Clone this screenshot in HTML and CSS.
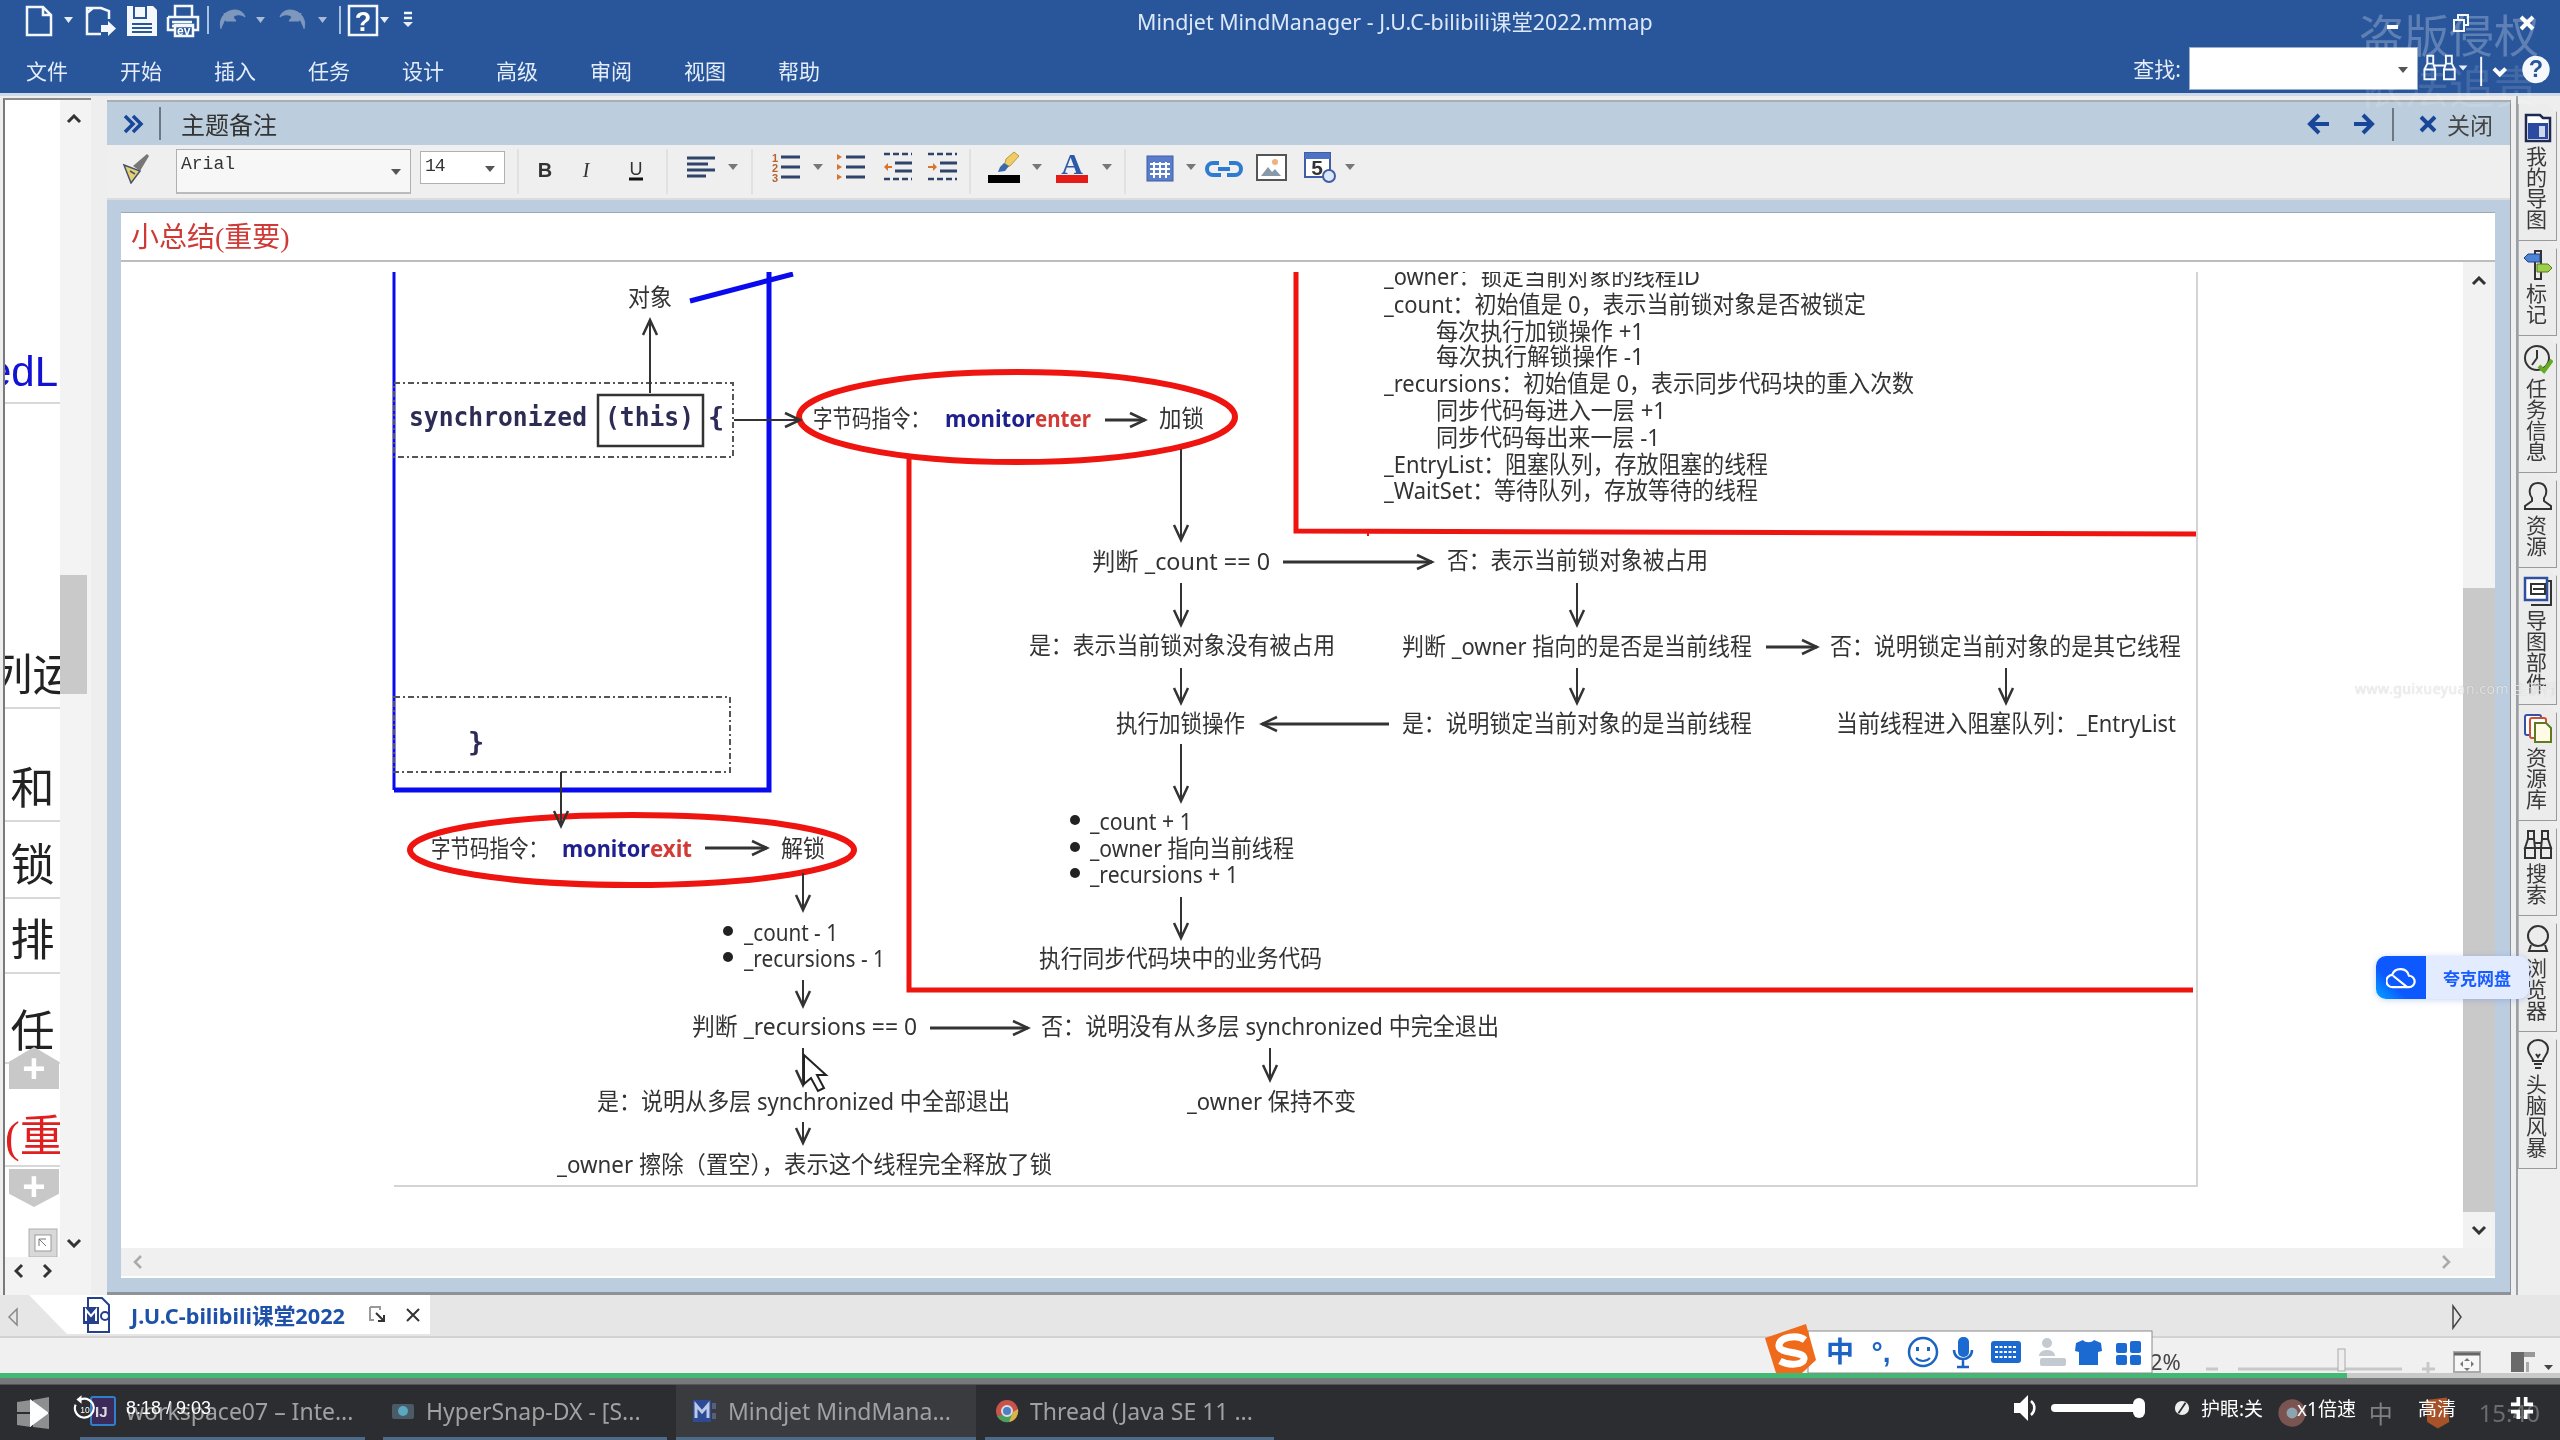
FILE: index.html
```html
<!DOCTYPE html>
<html lang="zh-CN">
<head>
    <meta charset="UTF-8">
    <title>Mindjet MindManager - J.U.C-bilibili课堂2022.mmap</title>
    <link rel="stylesheet" href="styles.css">
</head>
<body>
<div class="screen">

    <!-- window header -->
    <header class="header">
        <div class="titlebar">
            <svg class="qat" viewBox="0 0 430 47">
                <!-- new -->
                <path class="ic-w" d="M27 7h16l8 8v20H27z M43 7v8h8"/>
                <path class="ic-fill" d="M64 17h9l-4.500 6z"/>
                <!-- open -->
                <path class="ic-w" d="M87 13v-5h14l8 3v8 M87 13v21h14 M93 8l-6 5"/>
                <path class="ic-wf" d="M101 25h7v-4l8 7.500-8 7.500v-4h-7z"/>
                <!-- save -->
                <path class="ic-wf" d="M127 6h26l4 4v26h-30z"/>
                <path class="ic-b" d="M134 6h12v12h-12z M132 24h20 M132 28h20 M132 32h20"/>
                <path class="ic-wf" d="M141 8h3v8h-3z"/>
                <!-- print -->
                <path class="ic-w" d="M175 16v-10h17v10 M168 17h30v13h-6 M168 17v13h6 M172 22h20 M172 26h20"/>
                <path class="ic-w" d="M175 25h18v11h-18z"/>
                <text class="qat-small" x="177" y="35">ev</text>
                <path class="ic-sep" d="M208 6v28"/>
                <!-- undo / redo -->
                <path class="ic-dim" d="M221 29c-3-10 4-19 14-19 5 0 9 3 10 7-4-3-9-3-12 0l3 4h-10l-2-8 3 3"/>
                <path class="ic-dimtri" d="M256 17h9l-4.500 6z"/>
                <path class="ic-dim" d="M304 29c3-10-4-19-14-19-5 0-9 3-10 7 4-3 9-3 12 0l-3 4h10l2-8-3 3"/>
                <path class="ic-dimtri" d="M318 17h9l-4.500 6z"/>
                <path class="ic-sep" d="M340 6v28"/>
                <!-- help -->
                <path class="ic-w" d="M349 6h28v29h-28z"/>
                <text class="qat-help" x="363" y="31">?</text>
                <path class="ic-fill" d="M380 17h9l-4.500 6z"/>
                <path class="ic-w" d="M404 13h8 M404 18h8"/>
                <path class="ic-fill" d="M403 22h10l-5 5z"/>
            </svg>
            <div class="app-title">Mindjet MindManager - J.U.C-bilibili课堂2022.mmap</div>
            <svg class="winctl" viewBox="2380 0 180 47">
                <path class="ic-wl" d="M2387 27h11"/>
                <path class="ic-w2" d="M2454 20h10v11h-10z M2458 20v-5h10v10h-4"/>
                <path class="ic-wl" d="M2521 17l12 12 M2533 17l-12 12"/>
            </svg>
        </div>
        <nav class="menubar">
            <span class="menu-item">文件</span>
            <span class="menu-item">开始</span>
            <span class="menu-item">插入</span>
            <span class="menu-item">任务</span>
            <span class="menu-item">设计</span>
            <span class="menu-item">高级</span>
            <span class="menu-item">审阅</span>
            <span class="menu-item">视图</span>
            <span class="menu-item">帮助</span>
            <div class="finder">
                <label class="finder-label">查找:</label>
                <div class="finder-box"><span class="drop-tri"></span></div>
                <svg class="finder-tools" viewBox="2418 46 142 47">
                    <path class="ic-w2" d="M2426 56h6v8h-6z M2445 56h6v8h-6z M2423 70h11v10h-11z M2443 70h11v10h-11z M2426 64l-3 6 M2432 64l2 6 M2445 64l-2 6 M2451 64l3 6 M2432 66h13"/>
                    <path class="ic-fill" d="M2458 66h9l-4.500 5z"/>
                    <path class="ic-w2" d="M2481 57v30"/>
                    <path class="ic-wl" d="M2494 69l6 6 6-6"/>
                    <circle class="ic-wf" cx="2537" cy="70" r="14"/>
                    <text class="help-q" x="2537" y="78">?</text>
                </svg>
            </div>
        </nav>
    </header>

    <main class="workspace">
        <!-- outline pane on the left, mostly cut off -->
        <aside class="outline">
            <div class="outline-text">
                <div class="o-row o-r1 o-blue">edL</div>
                <div class="o-row o-r2 o-center">列运</div>
                <div class="o-row o-r3">和</div>
                <div class="o-row o-r4">锁</div>
                <div class="o-row o-r5">排</div>
                <div class="o-row o-r6">任</div>
                <div class="o-row o-r7 o-red">(重</div>
            </div>
            <div class="outline-scroll">
                <svg class="chev" viewBox="0 0 16 10"><path d="M2 8l6-6 6 6"/></svg>
                <div class="outline-thumb"></div>
                <svg class="thumb-btn" viewBox="0 0 30 30">
                    <rect class="tb-out" x="1" y="1" width="28" height="28"/>
                    <rect class="tb-in" x="7" y="7" width="16" height="16"/>
                    <path class="tb-ar" d="M11 18v-7h7 M11 11l7 7"/>
                </svg>
                <svg class="chev chev-down" viewBox="0 0 16 10"><path d="M2 2l6 6 6-6"/></svg>
            </div>
            <div class="outline-nav">
                <svg class="chev" viewBox="0 0 10 16"><path d="M8 2l-6 6 6 6"/></svg>
                <svg class="chev" viewBox="0 0 10 16"><path d="M2 2l6 6-6 6"/></svg>
            </div>
            <div class="zoom-plus zoom-plus-top"><span>+</span></div>
            <div class="zoom-plus zoom-plus-bottom"><span>+</span></div>
        </aside>

        <section class="notes">
            <div class="notes-head">
                <svg class="collapse" viewBox="0 0 24 24"><path d="M4 4l8 8-8 8 M12 4l8 8-8 8"/></svg>
                <span class="head-sep"></span>
                <span class="notes-title">主题备注</span>
                <svg class="head-nav" viewBox="2300 100 110 45">
                    <path class="nav-ar" d="M2312 123h18 M2320 114l-9 9 9 9"/>
                    <path class="nav-ar" d="M2355 123h18 M2364 114l9 9-9 9"/>
                    <path class="nav-sep" d="M2394 107v33"/>
                </svg>
                <svg class="head-x" viewBox="0 0 20 20"><path d="M3 3l14 14 M17 3L3 17"/></svg>
                <span class="head-close">关闭</span>
            </div>

            <div class="toolbar">
                <svg class="brush" viewBox="0 0 30 32">
                    <path class="brush-b" d="M12 14l14-12 2 2-9 15z"/>
                    <path class="brush-y" d="M3 13l16 6-9 12z"/>
                    <path class="brush-l" d="M3 13l16 6-9 12z M9 19l5 3"/>
                </svg>
                <div class="font-select">Arial<span class="drop-tri"></span></div>
                <div class="size-select">14<span class="drop-tri"></span></div>
                <svg class="tb-strip" viewBox="515 145 850 55">
                    <path class="tb-sep" d="M518 150v45 M667 150v45 M752 150v45 M970 150v45 M1125 150v45"/>
                    <text class="tb-b" x="545" y="178">B</text>
                    <text class="tb-i" x="586" y="178">I</text>
                    <text class="tb-u" x="636" y="176">U</text>
                    <path class="tb-ubar" d="M629 180h14"/>
                    <!-- align -->
                    <path class="tb-line" d="M687 159h28 M687 165h21 M687 171h28 M687 177h19"/>
                    <path class="tb-tri" d="M728 165h10l-5 6z"/>
                    <!-- numbered, bullets -->
                    <text class="tb-num" x="772" y="163">1</text>
                    <text class="tb-num" x="772" y="173">2</text>
                    <text class="tb-num" x="772" y="183">3</text>
                    <path class="tb-line" d="M781 158h19 M781 168h19 M781 178h19"/>
                    <path class="tb-tri" d="M813 165h10l-5 6z"/>
                    <path class="tb-dot" d="M837 155l5 3-5 3z M837 165l5 3-5 3z M837 175l5 3-5 3z"/>
                    <path class="tb-line" d="M846 158h19 M846 168h19 M846 178h19"/>
                    <!-- outdent, indent -->
                    <path class="tb-dash" d="M884 155h28 M884 180h28"/>
                    <path class="tb-line" d="M895 164h17 M895 172h17"/>
                    <path class="tb-dot" d="M884 168l4-4v3h4v2h-4v3z"/>
                    <path class="tb-dash" d="M928 155h29 M928 180h29"/>
                    <path class="tb-line" d="M940 164h17 M940 172h17"/>
                    <path class="tb-dot" d="M937 168l-4-4v3h-5v2h5v3z"/>
                    <!-- highlight -->
                    <path class="tb-pen" d="M1006 160l8-7 5 4-9 10-6 1z"/>
                    <path class="tb-pentip" d="M1000 168l4-4 5 3-4 5-7 1z"/>
                    <rect class="tb-black" x="988" y="176" width="32" height="8"/>
                    <path class="tb-tri" d="M1032 165h10l-5 6z"/>
                    <text class="tb-a" x="1072" y="175">A</text>
                    <rect class="tb-red" x="1056" y="176" width="32" height="8"/>
                    <path class="tb-tri" d="M1102 165h10l-5 6z"/>
                    <!-- table, link, picture, date -->
                    <rect class="tb-table" x="1147" y="157" width="26" height="25"/>
                    <path class="tb-grid" d="M1150 165h20 M1150 170h20 M1150 175h20 M1154 163v16 M1160 163v16 M1166 163v16"/>
                    <path class="tb-tri" d="M1186 165h10l-5 6z"/>
                    <path class="tb-link" d="M1219 164h-6a6 6 0 0 0 0 12h8 M1229 164h6a6 6 0 0 1 0 12h-8 M1218 170h12"/>
                    <rect class="tb-pic" x="1257" y="156" width="29" height="25"/>
                    <path class="tb-mtn" d="M1261 177l7-9 4 5 3-3 6 7z"/>
                    <circle class="tb-sun" cx="1275" cy="163" r="3"/>
                    <rect class="tb-cal" x="1305" y="154" width="25" height="24"/>
                    <rect class="tb-calh" x="1305" y="154" width="25" height="6"/>
                    <text class="tb-five" x="1317" y="176">5</text>
                    <circle class="tb-clk" cx="1329" cy="177" r="6"/>
                    <path class="tb-tri" d="M1345 165h10l-5 6z"/>
                </svg>
            </div>

            <div class="note-body">
                <div class="note-title">小总结(重要)</div>
                <div class="note-view">
                    <div class="note-scroll-area">
                        <svg class="diagram" viewBox="121 272 2342 976">
                            <defs>
                                <marker id="head" markerUnits="userSpaceOnUse" markerWidth="26" markerHeight="26" refX="21" refY="13" orient="auto">
                                    <path class="head-path" d="M6 6L21 13L6 20"/>
                                </marker>
                            </defs>

                            <!-- blue synchronized box -->
                            <path class="blue-thin" d="M394 272V790"/>
                            <path class="blue" d="M769 272V790H394"/>
                            <path class="blue" d="M690 301L793 274"/>
                            <rect class="dash" x="394" y="383" width="339" height="74"/>
                            <rect class="dash" x="394" y="697" width="336" height="75"/>
                            <rect class="this-box" x="598" y="395" width="105" height="51"/>

                            <text class="t" x="628" y="299" textLength="44" lengthAdjust="spacingAndGlyphs">对象</text>
                            <text class="code" x="409" y="417" textLength="178" lengthAdjust="spacingAndGlyphs">synchronized</text>
                            <text class="code" x="605" y="417" textLength="89" lengthAdjust="spacingAndGlyphs">(this)</text>
                            <text class="code" x="708" y="417">{</text>
                            <text class="code" x="468" y="742">}</text>

                            <!-- red boxes -->
                            <path class="red" d="M909 457V990H2193"/>
                            <path class="red" d="M1296 272V531L2196 534"/>
                            <path class="red-tick" d="M1368 531v5"/>
                            <ellipse class="red-ell" cx="1017" cy="417" rx="218" ry="45"/>
                            <ellipse class="red-ell" cx="632" cy="850" rx="222" ry="35"/>

                            <path class="arr" marker-end="url(#head)" d="M650 393V320"/>
                            <path class="arr" marker-end="url(#head)" d="M734 420H800"/>
                            <path class="arr arr-b" marker-end="url(#head)" d="M1105 420H1145"/>
                            <path class="arr" marker-end="url(#head)" d="M561 772V826"/>
                            <path class="arr arr-b" marker-end="url(#head)" d="M705 848H767"/>
                            <path class="arr" marker-end="url(#head)" d="M1181 449V540"/>
                            <path class="arr" marker-end="url(#head)" d="M1181 583V625"/>
                            <path class="arr" marker-end="url(#head)" d="M1181 668V703"/>
                            <path class="arr" marker-end="url(#head)" d="M1181 744V801"/>
                            <path class="arr" marker-end="url(#head)" d="M1181 897V938"/>
                            <path class="arr arr-b" marker-end="url(#head)" d="M1283 562H1432"/>
                            <path class="arr" marker-end="url(#head)" d="M1577 583V625"/>
                            <path class="arr" marker-end="url(#head)" d="M1577 668V703"/>
                            <path class="arr" marker-end="url(#head)" d="M2006 668V703"/>
                            <path class="arr arr-b" marker-end="url(#head)" d="M1766 647H1817"/>
                            <path class="arr arr-b" marker-end="url(#head)" d="M1389 724H1262"/>
                            <path class="arr" marker-end="url(#head)" d="M803 873V910"/>
                            <path class="arr" marker-end="url(#head)" d="M803 980V1006"/>
                            <path class="arr arr-b" marker-end="url(#head)" d="M930 1028H1028"/>
                            <path class="arr" marker-end="url(#head)" d="M803 1048V1085"/>
                            <path class="arr" marker-end="url(#head)" d="M1270 1048V1080"/>
                            <path class="arr" marker-end="url(#head)" d="M803 1122V1143"/>

                            <!-- top flow -->
                            <text class="t" x="813" y="420" textLength="117" lengthAdjust="spacingAndGlyphs">字节码指令：</text>
                            <text class="t mon" x="945" y="420" textLength="90" lengthAdjust="spacingAndGlyphs">monitor</text>
                            <text class="t act" x="1035" y="420" textLength="56" lengthAdjust="spacingAndGlyphs">enter</text>
                            <text class="t" x="1159" y="420" textLength="45" lengthAdjust="spacingAndGlyphs">加锁</text>

                            <text class="t" x="1092" y="563" textLength="178" lengthAdjust="spacingAndGlyphs">判断 _count == 0</text>
                            <text class="t" x="1447" y="562" textLength="261" lengthAdjust="spacingAndGlyphs">否：表示当前锁对象被占用</text>
                            <text class="t" x="1029" y="647" textLength="306" lengthAdjust="spacingAndGlyphs">是：表示当前锁对象没有被占用</text>
                            <text class="t" x="1402" y="648" textLength="350" lengthAdjust="spacingAndGlyphs">判断 _owner 指向的是否是当前线程</text>
                            <text class="t" x="1830" y="648" textLength="351" lengthAdjust="spacingAndGlyphs">否：说明锁定当前对象的是其它线程</text>
                            <text class="t" x="1116" y="725" textLength="129" lengthAdjust="spacingAndGlyphs">执行加锁操作</text>
                            <text class="t" x="1402" y="725" textLength="350" lengthAdjust="spacingAndGlyphs">是：说明锁定当前对象的是当前线程</text>
                            <text class="t" x="1836" y="725" textLength="340" lengthAdjust="spacingAndGlyphs">当前线程进入阻塞队列：_EntryList</text>

                            <circle class="bul" cx="1075" cy="823" r="5"/>
                            <circle class="bul" cx="1075" cy="850" r="5"/>
                            <circle class="bul" cx="1075" cy="876" r="5"/>
                            <text class="t" x="1090" y="823" textLength="102" lengthAdjust="spacingAndGlyphs">_count + 1</text>
                            <text class="t" x="1090" y="850" textLength="204" lengthAdjust="spacingAndGlyphs">_owner 指向当前线程</text>
                            <text class="t" x="1090" y="876" textLength="148" lengthAdjust="spacingAndGlyphs">_recursions + 1</text>
                            <text class="t" x="1039" y="960" textLength="283" lengthAdjust="spacingAndGlyphs">执行同步代码块中的业务代码</text>

                            <!-- field list -->
                            <text class="t" x="1384" y="278" textLength="316" lengthAdjust="spacingAndGlyphs">_owner：锁定当前对象的线程ID</text>
                            <text class="t" x="1384" y="306" textLength="482" lengthAdjust="spacingAndGlyphs">_count：初始值是 0，表示当前锁对象是否被锁定</text>
                            <text class="t" x="1436" y="333" textLength="208" lengthAdjust="spacingAndGlyphs">每次执行加锁操作 +1</text>
                            <text class="t" x="1436" y="358" textLength="208" lengthAdjust="spacingAndGlyphs">每次执行解锁操作  -1</text>
                            <text class="t" x="1384" y="385" textLength="530" lengthAdjust="spacingAndGlyphs">_recursions：初始值是 0，表示同步代码块的重入次数</text>
                            <text class="t" x="1436" y="412" textLength="230" lengthAdjust="spacingAndGlyphs">同步代码每进入一层 +1</text>
                            <text class="t" x="1436" y="439" textLength="224" lengthAdjust="spacingAndGlyphs">同步代码每出来一层 -1</text>
                            <text class="t" x="1384" y="466" textLength="384" lengthAdjust="spacingAndGlyphs">_EntryList：阻塞队列，存放阻塞的线程</text>
                            <text class="t" x="1384" y="492" textLength="374" lengthAdjust="spacingAndGlyphs">_WaitSet：等待队列，存放等待的线程</text>

                            <!-- bottom flow -->
                            <text class="t" x="431" y="850" textLength="117" lengthAdjust="spacingAndGlyphs">字节码指令：</text>
                            <text class="t mon" x="562" y="850" textLength="88" lengthAdjust="spacingAndGlyphs">monitor</text>
                            <text class="t act" x="650" y="850" textLength="42" lengthAdjust="spacingAndGlyphs">exit</text>
                            <text class="t" x="781" y="850" textLength="44" lengthAdjust="spacingAndGlyphs">解锁</text>

                            <circle class="bul" cx="728" cy="934" r="5"/>
                            <circle class="bul" cx="728" cy="960" r="5"/>
                            <text class="t" x="744" y="934" textLength="94" lengthAdjust="spacingAndGlyphs">_count - 1</text>
                            <text class="t" x="744" y="960" textLength="141" lengthAdjust="spacingAndGlyphs">_recursions - 1</text>
                            <text class="t" x="692" y="1028" textLength="225" lengthAdjust="spacingAndGlyphs">判断 _recursions == 0</text>
                            <text class="t" x="1041" y="1028" textLength="458" lengthAdjust="spacingAndGlyphs">否：说明没有从多层 synchronized 中完全退出</text>
                            <text class="t" x="597" y="1103" textLength="413" lengthAdjust="spacingAndGlyphs">是：说明从多层 synchronized 中全部退出</text>
                            <text class="t" x="1187" y="1103" textLength="169" lengthAdjust="spacingAndGlyphs">_owner 保持不变</text>
                            <text class="t" x="557" y="1166" textLength="495" lengthAdjust="spacingAndGlyphs">_owner 擦除（置空），表示这个线程完全释放了锁</text>

                            <path class="edge" d="M394 1186H2197V272"/>
                            <!-- mouse pointer in the recording -->
                            <path class="pointer" d="M804 1055V1084L811 1078L818 1091L824 1088L817 1075H826Z"/>
                        </svg>
                    </div>
                    <div class="vscroll">
                        <svg class="chev" viewBox="0 0 16 10"><path d="M2 8l6-6 6 6"/></svg>
                        <div class="vthumb"></div>
                        <svg class="chev chev-end" viewBox="0 0 16 10"><path d="M2 2l6 6 6-6"/></svg>
                    </div>
                    <div class="hscroll">
                        <svg class="hchev" viewBox="0 0 10 16"><path d="M8 2l-6 6 6 6"/></svg>
                        <svg class="hchev" viewBox="0 0 10 16"><path d="M2 2l6 6-6 6"/></svg>
                    </div>
                </div>
            </div>
        </section>

        <!-- vertical tabs on the right -->
        <aside class="side-tabs">
            <div class="side-tab">
                <svg class="side-ic" viewBox="0 0 30 32">
                    <path class="si-dk" d="M3 4h14l3 3h7v23H3z"/>
                    <rect class="si-blue" x="5" y="12" width="20" height="16"/>
                    <rect class="si-pale" x="16" y="15" width="6" height="11"/>
                </svg>
                <span class="side-label">我的导图</span>
            </div>
            <div class="side-tab">
                <svg class="side-ic" viewBox="0 0 30 32">
                    <path class="si-ln" d="M12 3h6v28h-6z"/>
                    <path class="si-bl" d="M1 10l4-4h12v8H5z"/>
                    <path class="si-gr" d="M14 16h11l4 4-4 4H14z"/>
                </svg>
                <span class="side-label">标记</span>
            </div>
            <div class="side-tab">
                <svg class="side-ic" viewBox="0 0 30 32">
                    <circle class="si-ln" cx="14" cy="15" r="12"/>
                    <path class="si-ln" d="M14 7v8l-5 7"/>
                    <path class="si-ck" d="M16 23l5 5 8-11"/>
                </svg>
                <span class="side-label">任务信息</span>
            </div>
            <div class="side-tab">
                <svg class="side-ic" viewBox="0 0 30 32">
                    <path class="si-ln" d="M9 18c-4-5-3-15 6-15s10 10 6 15v3l7 5v3H2v-3l7-5z"/>
                </svg>
                <span class="side-label">资源</span>
            </div>
            <div class="side-tab">
                <svg class="side-ic" viewBox="0 0 30 32">
                    <path class="si-ln" d="M8 6h20v24H8"/>
                    <rect class="si-dkl" x="2" y="3" width="22" height="22"/>
                    <rect class="si-ln" x="8" y="9" width="14" height="10"/>
                    <path class="si-ln" d="M10 14h12"/>
                </svg>
                <span class="side-label">导图部件</span>
            </div>
            <div class="side-tab">
                <svg class="side-ic" viewBox="0 0 30 32">
                    <rect class="si-s1" x="2" y="3" width="16" height="20" rx="2"/>
                    <rect class="si-s2" x="7" y="6" width="16" height="20" rx="2"/>
                    <path class="si-s3" d="M12 11h11l5 5v14H12z"/>
                </svg>
                <span class="side-label">资源库</span>
            </div>
            <div class="side-tab">
                <svg class="side-ic" viewBox="0 0 30 32">
                    <path class="si-ln" d="M5 3h6v8H5z M19 3h6v8h-6z M2 20l3-9h6l1 9z M18 20l1-9h6l3 9z M2 20h10v10H2z M18 20h10v10H18z M12 15h6 M12 20h6"/>
                </svg>
                <span class="side-label">搜索</span>
            </div>
            <div class="side-tab">
                <svg class="side-ic" viewBox="0 0 30 32">
                    <circle class="si-ln" cx="15" cy="13" r="10"/>
                    <path class="si-ln" d="M8 22l-2 6h18l-2-6"/>
                </svg>
                <span class="side-label">浏览器</span>
            </div>
            <div class="side-tab">
                <svg class="side-ic" viewBox="0 0 30 32">
                    <path class="si-ln" d="M10 22c0-4-5-6-5-12a10 9 0 0 1 20 0c0 6-5 8-5 12z M11 25h8 M12 29h6 M13 15l2 3 2-3"/>
                </svg>
                <span class="side-label">头脑风暴</span>
            </div>
        </aside>
    </main>

    <!-- document tabs -->
    <div class="doc-tabs">
        <svg class="tab-scroll" viewBox="0 0 12 20"><path d="M10 2L2 10l8 8z"/></svg>
        <div class="doc-tab">
            <svg class="doc-ic" viewBox="0 0 30 38">
                <path class="doc-o" d="M6 2h14l7 7v27H6z"/>
                <rect class="doc-m" x="1" y="11" width="16" height="17"/>
                <path class="doc-w" d="M4 25V14l5 6 5-6v11"/>
                <circle class="doc-o" cx="23" cy="20" r="4"/>
            </svg>
            <span class="doc-name">J.U.C-bilibili课堂2022</span>
            <svg class="doc-pop" viewBox="0 0 16 18"><path class="pop-a" d="M1 1h10v3 M1 1v13h4"/><path class="pop-b" d="M7 7l8 8 M15 9v6H9"/></svg>
            <svg class="doc-x" viewBox="0 0 16 16"><path d="M2 2l12 12 M14 2L2 14"/></svg>
        </div>
        <svg class="tab-scroll tab-scroll-r" viewBox="0 0 12 26"><path d="M2 2l8 11-8 11z"/></svg>
    </div>

    <!-- status bar -->
    <div class="statusbar">
        <svg class="status-strip" viewBox="2150 1338 410 35">
            <text class="zoom-pct" x="2150" y="1370">2%</text>
            <path class="zs-line" d="M2206 1369h12 M2238 1369h164"/>
            <rect class="zs-thumb" x="2338" y="1349" width="7" height="22"/>
            <path class="zs-line" d="M2422 1369h13 M2428 1362v13"/>
            <rect class="fit-out" x="2454" y="1352" width="26" height="20"/>
            <path class="fit-top" d="M2454 1354h26"/>
            <path class="fit-dot" d="M2467 1358l3 3h-6z M2467 1371l3-3h-6z M2460 1364l3-3v6z M2474 1364l-3-3v6z"/>
            <rect class="lay-a" x="2511" y="1352" width="13" height="20"/>
            <rect class="lay-b" x="2524" y="1352" width="11" height="5"/>
            <path class="lay-c" d="M2526 1362h3v10h-3z"/>
            <path class="lay-t" d="M2544 1365h9l-4.500 5z"/>
        </svg>
    </div>

    <!-- video progress of the recording -->
    <div class="progress"><div class="progress-done"></div></div>
    <div class="progress-rail"></div>

    <!-- windows taskbar underneath the player controls -->
    <footer class="taskbar">
        <svg class="win-logo" viewBox="0 0 34 32">
            <path class="win-g" d="M1 5l14-2v12H1z M17 3l16-3v15H17z M1 17h14v13L1 28z M17 17h16v15l-16-2z"/>
            <path class="win-p" d="M14 2l19 14-19 14z"/>
        </svg>
        <div class="task task-1">
            <svg class="task-ic" viewBox="0 0 28 32"><rect class="ij-a" x="2" y="2" width="24" height="28" rx="2"/><text class="ij-t" x="6" y="22">IJ</text></svg>
            <span class="task-name">workspace07 – Inte...</span>
        </div>
        <div class="task task-2">
            <svg class="task-ic" viewBox="0 0 28 32"><rect class="hs-a" x="3" y="9" width="22" height="15" rx="2"/><circle class="hs-b" cx="14" cy="16" r="5"/></svg>
            <span class="task-name">HyperSnap-DX - [S...</span>
        </div>
        <div class="task task-3">
            <svg class="task-ic" viewBox="0 0 28 32"><rect class="mm-a" x="2" y="5" width="18" height="22"/><path class="mm-b" d="M5 23V10l6 7 6-7v13"/><path class="mm-c" d="M21 8h4v6h-4z M21 18h4v6h-4z"/></svg>
            <span class="task-name">Mindjet MindMana...</span>
        </div>
        <div class="task task-4">
            <svg class="task-ic" viewBox="0 0 28 32">
                <circle class="cr-r" cx="14" cy="16" r="11"/>
                <path class="cr-g" d="M4 21a11 11 0 0 0 12 6l5-9z"/>
                <path class="cr-y" d="M25 14a11 11 0 0 1-9 13l4-10z"/>
                <circle class="cr-w" cx="14" cy="16" r="5"/>
            </svg>
            <span class="task-name">Thread (Java SE 11 ...</span>
        </div>
        <div class="tray">
            <svg class="tray-ic" viewBox="0 0 44 44">
                <circle class="fl-a" cx="22" cy="22" r="20"/><circle class="fl-b" cx="22" cy="22" r="8"/>
            </svg>
            <span class="tray-ime">中</span>
            <svg class="tray-s" viewBox="0 0 32 44"><path class="sx" d="M2 6l26-3 3 30-14 8-13-8z"/></svg>
            <span class="tray-clock">15:40</span>
        </div>
    </footer>

    <!-- player controls, drawn over the taskbar -->
    <div class="player">
        <svg class="replay" viewBox="0 0 28 30">
            <path class="rp" d="M9 5a11 11 0 1 1-6 6"/>
            <path class="rpf" d="M10 0v10L4 5z"/>
            <text class="rpt" x="14" y="21">10</text>
        </svg>
        <span class="play-time">8:18 / 9:03</span>
        <svg class="volume" viewBox="0 0 24 32"><path class="vf" d="M2 11h6l8-8v26l-8-8H2z"/><path class="vl" d="M19 9a9 9 0 0 1 0 14"/></svg>
        <div class="vol-bar"><span class="vol-knob"></span></div>
        <svg class="eye" viewBox="0 0 18 18"><circle class="ef" cx="9" cy="9" r="8"/><path class="el" d="M13 3L5 15"/></svg>
        <span class="pl-label pl-eye">护眼:关</span>
        <span class="pl-label pl-speed">x1倍速</span>
        <span class="pl-label pl-hd">高清</span>
        <svg class="fs-exit" viewBox="0 0 26 26"><path d="M9 1v8H1 M17 1v8h8 M9 25v-8H1 M17 25v-8h8"/></svg>
    </div>

    <!-- overlays -->
    <div class="ime">
        <svg class="ime-svg" viewBox="1762 1322 392 52">
            <rect class="ime-bg" x="1808" y="1331" width="344" height="42"/>
            <path class="ime-s" d="M1765 1338L1806 1324L1816 1360L1802 1373H1776Z"/>
            <path class="ime-sw" d="M1805 1340c-8-6-25-3-26 5-1 10 26 5 25 14-1 6-15 7-24 2"/>
            <text class="ime-zh" x="1840" y="1362">中</text>
            <text class="ime-pt" x="1881" y="1362">°,</text>
            <circle class="ime-ln" cx="1923" cy="1352" r="14"/>
            <path class="ime-ln2" d="M1916 1358c4 4 10 4 14 0"/>
            <path class="ime-fl" d="M1916 1347h3v4h-3z M1927 1347h3v4h-3z"/>
            <rect class="ime-bl" x="1958" y="1337" width="11" height="20" rx="5"/>
            <path class="ime-ln" d="M1954 1350c0 12 18 12 18 0 M1963 1359v7 M1957 1367h12"/>
            <rect class="ime-bl" x="1991" y="1341" width="30" height="22" rx="3"/>
            <path class="ime-wd" d="M1995 1347h22 M1995 1352h22 M1995 1357h22"/>
            <circle class="ime-gr" cx="2047" cy="1343" r="5"/>
            <path class="ime-gr" d="M2039 1356c0-8 16-8 16 0z"/>
            <rect class="ime-gr" x="2040" y="1358" width="26" height="8" rx="2"/>
            <path class="ime-bl" d="M2083 1340l-7 3-1 8 4 1v13h19v-13l4-1-1-8-7-3c-2 3-9 3-11 0z"/>
            <rect class="ime-bl" x="2116" y="1343" width="11" height="10" rx="2"/>
            <rect class="ime-bl" x="2130" y="1341" width="11" height="12" rx="2"/>
            <rect class="ime-bl" x="2116" y="1355" width="11" height="10" rx="2"/>
            <rect class="ime-bl" x="2130" y="1355" width="11" height="10" rx="2"/>
        </svg>
    </div>

    <div class="quark">
        <div class="quark-ic">
            <svg viewBox="0 0 34 26"><path d="M8 24a7 7 0 0 1-1-14 10 10 0 0 1 19 1 6.500 6.500 0 0 1 0 13z M8 11l16 13"/></svg>
        </div>
        <span class="quark-name">夸克网盘</span>
    </div>

    <div class="stamp stamp-a">盗版侵权</div>
    <div class="stamp stamp-b">依法追责</div>
    <div class="site-mark">www.guixueyuan.com 主讲行</div>
</div>
</body>
</html>
```

FILE: styles.css
```css
* { box-sizing: border-box; }

html, body {
    margin: 0;
    padding: 0;
    background: #2d2e30;
}

.screen {
    position: relative;
    width: 2560px;
    height: 1440px;
    overflow: hidden;
    display: flex;
    flex-direction: column;
    background: #eeeeee;
    font-family: "Noto Sans", "Noto Sans CJK SC", sans-serif;
    color: #333;
    filter: blur(0.6px);
}

svg { display: block; flex: none; }

/* ---------- header ---------- */
.header {
    flex: none;
    height: 96px;
    background: #29569b;
    border-bottom: 3px solid #cfdae8;
    color: #e4edf9;
}
.titlebar {
    height: 47px;
    display: grid;
    grid-template-columns: 1137px 1fr 180px;
    align-items: center;
}
.qat { width: 430px; height: 47px; }
.ic-w { fill: none; stroke: #f4f8fd; stroke-width: 2.5; }
.ic-w2 { fill: none; stroke: #f4f8fd; stroke-width: 2; }
.ic-wl { fill: none; stroke: #ffffff; stroke-width: 4; }
.ic-wf { fill: #f4f8fd; }
.ic-fill { fill: #e4edf9; }
.ic-b { fill: none; stroke: #29569b; stroke-width: 2; }
.ic-sep { stroke: #a9c0de; stroke-width: 2; }
.ic-dim { fill: #7e98bd; stroke: #7e98bd; stroke-width: 1; }
.ic-dimtri { fill: #a7bbd6; }
.qat-small { font: bold 12px "Liberation Sans", sans-serif; fill: #fff; }
.qat-help { font: bold 27px "Liberation Sans", sans-serif; fill: #fff; text-anchor: middle; }

.app-title {
    margin-top: -6px;
    font-size: 21.4px;
    color: #dce8f8;
    white-space: nowrap;
}
.winctl { width: 180px; height: 47px; }

.menubar {
    height: 46px;
    display: flex;
    align-items: center;
    padding-left: 26px;
    gap: 52px;
    font-size: 21px;
}
.menu-item { width: 42px; white-space: nowrap; }

.finder {
    margin-left: auto;
    display: flex;
    align-items: center;
    height: 46px;
}
.finder-label { margin-right: 8px; margin-top: -4px; font-size: 21px; }
.finder-box {
    position: relative;
    width: 229px;
    height: 43px;
    margin-top: -3px;
    background: #fff;
    border: 1px solid #9db0c9;
}
.drop-tri {
    position: absolute;
    right: 9px;
    top: 50%;
    margin-top: -2px;
    border-left: 5px solid transparent;
    border-right: 5px solid transparent;
    border-top: 6px solid #555;
}
.finder-tools { width: 142px; height: 46px; margin-top: -2px; }
.help-q { font: bold 24px "Liberation Sans", sans-serif; fill: #29569b; text-anchor: middle; }

/* ---------- workspace ---------- */
.workspace {
    flex: none;
    height: 1199px;
    display: flex;
    background: #eeeeee;
}

.outline {
    position: relative;
    flex: none;
    width: 88px;
    height: 1197px;
    margin-left: 3px;
    margin-top: 2px;
    display: grid;
    grid-template-columns: 55px 31px;
    grid-template-rows: 1fr 38px;
    border-left: 2px solid #7a7a7a;
    border-top: 2px solid #8c8c8c;
    background: #f3f3f3;
}
.outline-text {
    background: #fff;
    overflow: hidden;
    font-family: "Liberation Serif", "Noto Sans CJK SC", serif;
    font-size: 44px;
    line-height: 44px;
    color: #222;
}
.o-row {
    display: flex;
    align-items: flex-end;
    justify-content: center;
    padding-bottom: 8px;
    border-bottom: 2px solid #d8d8d8;
    white-space: nowrap;
}
.o-r1 { height: 304px; justify-content: flex-end; padding-right: 2px; }
.o-r2 { height: 305px; }
.o-r3 { height: 113px; }
.o-r4 { height: 77px; }
.o-r5 { height: 75px; }
.o-r6 { height: 90px; padding-bottom: 7px; }
.o-r7 { height: 103px; justify-content: flex-start; padding-bottom: 5px; }
.o-blue { color: #1212d2; font-family: "Liberation Sans", sans-serif; font-size: 42px; }
.o-red { color: #e02020; }

.outline-scroll {
    display: flex;
    flex-direction: column;
    align-items: center;
}
.chev { width: 16px; height: 10px; fill: none; stroke: #333; stroke-width: 3; margin-top: 14px; }
.outline-scroll .chev { margin-left: -4px; }
.outline-thumb {
    width: 27px;
    height: 119px;
    margin-top: 451px;
    align-self: flex-start;
    background: #c9c9c9;
}
.thumb-btn {
    width: 30px;
    height: 30px;
    margin-top: 534px;
    margin-left: -66px;
    margin-bottom: -12px;
}
.outline-scroll .chev-down { margin-top: -8px; }
.tb-out { fill: #d8d8d8; stroke: #b0b0b0; }
.tb-in { fill: #fff; stroke: #999; }
.tb-ar { fill: none; stroke: #777; }

.outline-nav {
    grid-column: 1 / 3;
    display: flex;
    gap: 18px;
    padding-left: 9px;
    background: #f3f3f3;
}
.outline-nav .chev { width: 10px; height: 16px; margin-top: 6px; }

.zoom-plus {
    position: absolute;
    left: 4px;
    width: 50px;
    height: 42px;
    background: #c8c8c8;
    color: #fff;
    font: bold 40px/42px "Liberation Sans", sans-serif;
    text-align: center;
}
.zoom-plus-top { top: 947px; clip-path: polygon(0 35%, 50% 0, 100% 35%, 100% 100%, 0 100%); }
.zoom-plus-bottom { top: 1069px; height: 38px; line-height: 34px; clip-path: polygon(0 0, 100% 0, 100% 65%, 50% 100%, 0 65%); }

/* ---------- notes pane ---------- */
.notes {
    flex: none;
    width: 2404px;
    margin-left: 16px;
    margin-top: 4px;
    height: 1195px;
    display: flex;
    flex-direction: column;
    background: #bccddf;
    border-bottom: 3px solid #8f9296;
    border-right: 1px solid #8f9296;
}
.notes-head {
    flex: none;
    height: 45px;
    display: flex;
    align-items: center;
    padding-left: 14px;
    background: #bccddd;
    border-top: 2px solid #a8aeb3;
}
.collapse { width: 24px; height: 24px; fill: none; stroke: #18479a; stroke-width: 3.5; }
.head-sep { width: 2px; height: 33px; margin-left: 14px; background: #6d7882; }
.notes-title { margin-left: 20px; font-size: 24px; color: #333; }
.head-nav { width: 110px; height: 45px; margin-left: auto; }
.nav-ar { fill: none; stroke: #18479a; stroke-width: 4; }
.nav-sep { stroke: #6d7882; stroke-width: 2; }
.head-x { width: 20px; height: 20px; margin-left: 9px; fill: none; stroke: #18479a; stroke-width: 4; }
.head-close { margin-left: 9px; margin-right: 17px; font-size: 23px; color: #444; }

.toolbar {
    flex: none;
    height: 55px;
    display: flex;
    align-items: center;
    padding-left: 14px;
    background: #efefef;
    border-bottom: 2px solid #dcdcdc;
}
.brush { width: 30px; height: 32px; margin-top: -7px; }
.brush-b { fill: #777; }
.brush-y { fill: #e8cf74; }
.brush-l { fill: none; stroke: #44556a; stroke-width: 1.5; }

.font-select, .size-select {
    position: relative;
    background: #fff;
    border: 1px solid #b0b0b0;
    font-family: "Liberation Mono", monospace;
    font-size: 18px;
    line-height: 28px;
    color: #333;
}
.font-select { width: 235px; height: 45px; margin-left: 25px; padding-left: 4px; border-bottom: 2px solid #bbb; background: #f7f7f7; }
.size-select { width: 85px; height: 33px; margin-left: 9px; margin-top: -8px; padding-left: 4px; letter-spacing: -1px; }
.tb-strip { width: 850px; height: 55px; margin-left: 10px; }

.tb-sep { stroke: #dddddd; stroke-width: 1.5; }
.tb-b { font: bold 20px "Liberation Sans", sans-serif; fill: #333; text-anchor: middle; }
.tb-i { font: italic 20px "Liberation Serif", serif; fill: #333; text-anchor: middle; }
.tb-u { font: 18px "Liberation Sans", sans-serif; fill: #333; text-anchor: middle; }
.tb-ubar { stroke: #111; stroke-width: 3; }
.tb-line { fill: none; stroke: #2f4468; stroke-width: 3; }
.tb-tri { fill: #777; }
.tb-num { font: bold 11px "Liberation Sans", sans-serif; fill: #b9622c; }
.tb-dot { fill: #d6752b; }
.tb-dash { fill: none; stroke: #2f4468; stroke-width: 2.5; stroke-dasharray: 6 3; }
.tb-pen { fill: #f0cc66; stroke: #b99a3a; }
.tb-pentip { fill: #3a68a8; }
.tb-black { fill: #000; }
.tb-a { font: bold 30px "Liberation Serif", serif; fill: #2b5aa8; text-anchor: middle; }
.tb-red { fill: #e41b17; }
.tb-table { fill: #5b7cc9; stroke: #3f5ea6; }
.tb-grid { fill: none; stroke: #fff; stroke-width: 2; }
.tb-link { fill: none; stroke: #2f7bd0; stroke-width: 4; }
.tb-pic { fill: #fff; stroke: #555; stroke-width: 2; }
.tb-mtn { fill: #8899aa; }
.tb-sun { fill: #f0b080; }
.tb-cal { fill: #fff; stroke: #3f5ea6; stroke-width: 2; }
.tb-calh { fill: #4e73c4; }
.tb-five { font: bold 21px "Liberation Sans", sans-serif; fill: #333; text-anchor: middle; }
.tb-clk { fill: #dde6f5; stroke: #3f5ea6; stroke-width: 2; }

.note-body {
    flex: 1;
    margin: 12px 15px 14px 14px;
    display: flex;
    flex-direction: column;
    background: #fff;
    border-top: 1px solid #9da8b0;
}
.note-title {
    flex: none;
    height: 49px;
    padding-left: 10px;
    border-bottom: 2px solid #bdbdbd;
    font-family: "Liberation Serif", "Noto Sans CJK SC", serif;
    font-size: 28px;
    line-height: 50px;
    color: #cf3a36;
}
.note-view {
    flex: 1;
    display: grid;
    grid-template-columns: 1fr 32px;
    grid-template-rows: 1fr 30px;
    min-height: 0;
}
.note-scroll-area {
    padding-top: 10px;
    background: #fff;
    overflow: hidden;
}
.diagram { width: 2342px; height: 976px; background: #fff; }

.t {
    font-family: "Noto Sans", "Noto Sans CJK SC", sans-serif;
    font-size: 24px;
    fill: #333;
    dominant-baseline: central;
    transform: translateY(-3px);
}
.mon { fill: #1f1f8e; font-weight: 700; }
.act { fill: #d23a35; font-weight: 700; }
.code {
    font-family: "DejaVu Sans Mono", monospace;
    font-size: 27px;
    font-weight: 700;
    fill: #2c2c55;
    dominant-baseline: central;
    transform: translateY(-1px);
}
.blue { fill: none; stroke: #0a0aee; stroke-width: 5; }
.blue-thin { fill: none; stroke: #0a0aee; stroke-width: 3; }
.dash { fill: none; stroke: #555; stroke-width: 2; stroke-dasharray: 6 3 2 3; }
.this-box { fill: none; stroke: #333; stroke-width: 2.5; }
.red { fill: none; stroke: #ee1410; stroke-width: 5; }
.red-tick { stroke: #ee1410; stroke-width: 2; }
.red-ell { fill: none; stroke: #ee1410; stroke-width: 6; }
.arr { fill: none; stroke: #333; stroke-width: 2; }
.arr-b { stroke-width: 3; }
.head-path { fill: none; stroke: #333; stroke-width: 2.5; }
.bul { fill: #222; transform: translateY(-3px); }
.edge { fill: none; stroke: #d4d4d4; stroke-width: 2; }
.pointer { fill: #fff; stroke: #222; stroke-width: 2; }

.vscroll {
    display: flex;
    flex-direction: column;
    align-items: center;
    background: #f2f2f2;
}
.vthumb {
    width: 100%;
    height: 624px;
    margin-top: 302px;
    background: #c9c9c9;
}
.vscroll .chev { stroke: #333; flex: none; }
.vscroll .chev-end { margin-top: 13px; }
.hscroll {
    grid-column: 1 / 3;
    display: flex;
    justify-content: space-between;
    padding: 6px 44px 0 12px;
    background: #f0f0f0;
    border-bottom: 2px solid #fff;
}
.hchev { width: 10px; height: 16px; fill: none; stroke: #aaa; stroke-width: 2.5; }

/* ---------- right tabs ---------- */
.side-tabs {
    flex: none;
    width: 46px;
    margin-left: 5px;
    padding-top: 8px;
    padding-right: 5px;
    display: flex;
    flex-direction: column;
    border-left: 2px solid #9aa0a6;
}
.side-tab {
    display: flex;
    flex-direction: column;
    align-items: center;
    padding: 7px 0 10px;
    background: #ececec;
    border: 1px solid #9a9a9a;
    border-left-color: #b5b5b5;
    border-top: none;
    clip-path: polygon(0 0, 72% 0, 100% 8px, 100% 100%, 0 100%);
}
.side-ic { width: 30px; height: 32px; }
.side-label {
    margin-top: 3px;
    margin-right: 4px;
    writing-mode: vertical-rl;
    text-orientation: upright;
    font-size: 21px;
    line-height: 24px;
    color: #3a3a3a;
}
.si-dk { fill: #fff; stroke: #1e2b50; stroke-width: 2.5; }
.si-dkl { fill: #fff; stroke: #2f4f9f; stroke-width: 2.5; }
.si-blue { fill: #2a4ba0; }
.si-pale { fill: #cfd9ee; }
.si-ln { fill: none; stroke: #333; stroke-width: 2; }
.si-bl { fill: #4d84d8; stroke: #23437f; stroke-width: 1; }
.si-gr { fill: #9fcf4a; stroke: #4f7a1a; stroke-width: 1; }
.si-ck { fill: none; stroke: #66aa22; stroke-width: 4; }
.si-s1 { fill: #fff; stroke: #3450a8; stroke-width: 2; }
.si-s2 { fill: #fff; stroke: #d05030; stroke-width: 2; }
.si-s3 { fill: #fffbe5; stroke: #5f7a20; stroke-width: 2; }

/* ---------- document tabs ---------- */
.doc-tabs {
    flex: none;
    height: 43px;
    display: flex;
    align-items: flex-start;
    background: #e6e6e6;
    border-bottom: 2px solid #d2d2d2;
    padding-left: 7px;
}
.tab-scroll { width: 12px; height: 20px; margin-top: 12px; fill: none; stroke: #888; stroke-width: 1.5; }
.tab-scroll-r { height: 26px; margin-top: 9px; margin-left: 2021px; stroke: #444; }
.doc-tab {
    width: 401px;
    height: 39px;
    margin-left: 10px;
    padding-left: 53px;
    display: flex;
    align-items: center;
    background: #fff;
    clip-path: polygon(0 0, 100% 0, 100% 100%, 38px 100%);
}
.doc-ic { width: 30px; height: 38px; }
.doc-o { fill: none; stroke: #23408c; stroke-width: 2; }
.doc-m { fill: #23408c; }
.doc-w { fill: none; stroke: #fff; stroke-width: 2; }
.doc-name {
    margin-left: 19px;
    font-size: 21.7px;
    font-weight: 700;
    color: #1e51a8;
    white-space: nowrap;
}
.doc-pop { width: 16px; height: 18px; margin-left: 24px; fill: none; }
.pop-a { stroke: #999; stroke-width: 2; }
.pop-b { stroke: #333; stroke-width: 2; }
.doc-x { width: 16px; height: 16px; margin-left: 20px; fill: none; stroke: #333; stroke-width: 2; }

/* ---------- status bar ---------- */
.statusbar {
    flex: none;
    height: 35px;
    background: #f0f0f0;
    display: flex;
    justify-content: flex-end;
}
.status-strip { width: 410px; height: 35px; }
.zoom-pct { font-size: 22px; fill: #444; }
.zs-line { fill: none; stroke: #c8c8c8; stroke-width: 3; }
.zs-thumb { fill: #eee; stroke: #aaa; }
.fit-out { fill: #f7f7f7; stroke: #aaa; stroke-width: 2; }
.fit-top { stroke: #666; stroke-width: 3; }
.fit-dot { fill: #777; }
.lay-a { fill: #6a6a6a; }
.lay-b { fill: #999; }
.lay-c { fill: #aaa; }
.lay-t { fill: #444; }

.progress {
    flex: none;
    height: 5px;
    background: #c9c9c9;
}
.progress-done { width: 2347px; height: 5px; background: #41b974; }
.progress-rail { flex: none; height: 7px; background: #77787a; border-bottom: 1px solid #55565a; }

/* ---------- taskbar ---------- */
.taskbar {
    flex: 1;
    display: flex;
    align-items: stretch;
    background: #2c2d30;
    padding-left: 16px;
}
.win-logo { width: 34px; height: 32px; align-self: center; }
.win-g { fill: #8e8f90; }
.win-p { fill: #fff; }
.task {
    display: flex;
    align-items: center;
    gap: 9px;
    border-bottom: 3px solid #4d6a88;
    white-space: nowrap;
}
.task-1 { width: 285px; margin-left: 30px; padding-left: 9px; }
.task-2 { width: 284px; margin-left: 18px; padding-left: 6px; }
.task-3 { width: 300px; margin-left: 9px; padding-left: 15px; background: #3a3b3e; }
.task-4 { width: 289px; margin-left: 9px; padding-left: 8px; }
.task-ic { width: 28px; height: 32px; }
.task-name { font-size: 23px; color: #a0a1a3; }
.ij-a { fill: #3b2a5a; stroke: #2f80c8; stroke-width: 2; }
.ij-t { font: bold 15px "Liberation Sans", sans-serif; fill: #dddddd; }
.hs-a { fill: #4a5a66; }
.hs-b { fill: #5aa7c0; }
.mm-a { fill: #2d4a96; }
.mm-b { fill: none; stroke: #bcc8e4; stroke-width: 3; }
.mm-c { fill: #55607a; }
.cr-r { fill: #c9524a; }
.cr-g { fill: #4b9f5c; }
.cr-y { fill: #d8b44a; }
.cr-w { fill: #4d7fc4; stroke: #ddd; stroke-width: 2; }

.tray {
    margin-left: auto;
    display: flex;
    align-items: center;
    padding-right: 20px;
    color: #7f8083;
}
.tray-ic { width: 30px; height: 30px; }
.fl-a { fill: #7a5450; }
.fl-b { fill: #8ba4b0; }
.tray-ime { margin-left: 62px; font-size: 24px; }
.tray-s { width: 36px; height: 36px; margin-left: 26px; }
.sx { fill: #a8522a; }
.tray-clock { margin-left: 24px; font-size: 24px; color: #6b6c6f; }

.player {
    position: absolute;
    left: 0;
    right: 0;
    top: 1391px;
    height: 34px;
    display: flex;
    align-items: center;
    color: #fff;
}
.replay { width: 24px; height: 26px; margin-left: 73px; flex: none; }
.rp { fill: none; stroke: #fff; stroke-width: 2.5; }
.rpf { fill: #fff; }
.rpt { font: 10px "Liberation Sans", sans-serif; fill: #fff; text-anchor: middle; }
.play-time { width: 86px; margin-left: 29px; white-space: nowrap; font-family: "Liberation Sans", sans-serif; font-size: 18px; flex: none; }
.volume { width: 24px; height: 32px; margin-left: 1800px; }
.vf { fill: #fff; }
.vl { fill: none; stroke: #fff; stroke-width: 2.5; }
.vol-bar {
    position: relative;
    width: 93px;
    height: 8px;
    margin-left: 15px;
    border-radius: 4px;
    background: #fff;
    flex: none;
}
.vol-knob {
    position: absolute;
    right: -1px;
    top: -6px;
    width: 12px;
    height: 20px;
    border-radius: 6px;
    background: #fff;
}
.eye { width: 16px; height: 16px; margin-left: 30px; }
.ef { fill: #eee; }
.el { stroke: #2c2d30; stroke-width: 2; }
.pl-label { white-space: nowrap; font-size: 19px; flex: none; }
.pl-eye { width: 59px; margin-left: 11px; }
.pl-speed { width: 54px; margin-left: 37px; }
.pl-hd { width: 37px; margin-left: 67px; }
.fs-exit { width: 24px; height: 24px; margin-left: 55px; fill: none; stroke: #fff; stroke-width: 4; }

/* ---------- overlays ---------- */
.ime {
    position: absolute;
    left: 1762px;
    top: 1322px;
    width: 392px;
    height: 52px;
}
.ime-svg { width: 392px; height: 52px; }
.ime-bg { fill: #fff; stroke: #8a8a8a; stroke-width: 1; }
.ime-s { fill: #ef6a1b; }
.ime-sw { fill: none; stroke: #fff; stroke-width: 7; }
.ime-zh { font: bold 28px "Noto Sans CJK SC", sans-serif; fill: #1b64c4; text-anchor: middle; }
.ime-pt { font: bold 28px "Liberation Sans", sans-serif; fill: #1b64c4; text-anchor: middle; }
.ime-ln { fill: none; stroke: #1b64c4; stroke-width: 2.5; }
.ime-ln2 { fill: none; stroke: #1b64c4; stroke-width: 2; }
.ime-fl { fill: #1b64c4; }
.ime-bl { fill: #1b6ad2; }
.ime-wd { fill: none; stroke: #fff; stroke-width: 2; stroke-dasharray: 3 1.500; }
.ime-gr { fill: #c4cad2; }

.quark {
    position: absolute;
    left: 2376px;
    top: 956px;
    width: 153px;
    height: 43px;
    display: flex;
    align-items: center;
    border-radius: 10px;
    background: #e3ebff;
    box-shadow: 0 1px 6px rgba(70, 110, 220, 0.3);
    overflow: hidden;
}
.quark-ic {
    width: 50px;
    height: 43px;
    display: flex;
    align-items: center;
    justify-content: center;
    background: linear-gradient(225deg, #0e58ff 65%, #00a6ff);
}
.quark-ic svg { width: 30px; height: 23px; fill: none; stroke: #fff; stroke-width: 2.5; }
.quark-name { margin-left: 17px; font-size: 17px; font-weight: 700; color: #175cff; white-space: nowrap; }

.stamp {
    position: absolute;
    left: 2359px;
    width: 181px;
    font-size: 45px;
    line-height: 45px;
    white-space: nowrap;
    color: rgba(255, 255, 255, 0.25);
}
.stamp-a { top: 13px; }
.stamp-b { top: 64px; color: rgba(255, 255, 255, 0.12); }
.site-mark {
    position: absolute;
    left: 2355px;
    top: 678px;
    font-size: 14px;
    letter-spacing: 0.5px;
    white-space: nowrap;
    color: rgba(255, 255, 255, 0.7);
    text-shadow: 0 0 1px rgba(0, 0, 0, 0.25);
}
```
